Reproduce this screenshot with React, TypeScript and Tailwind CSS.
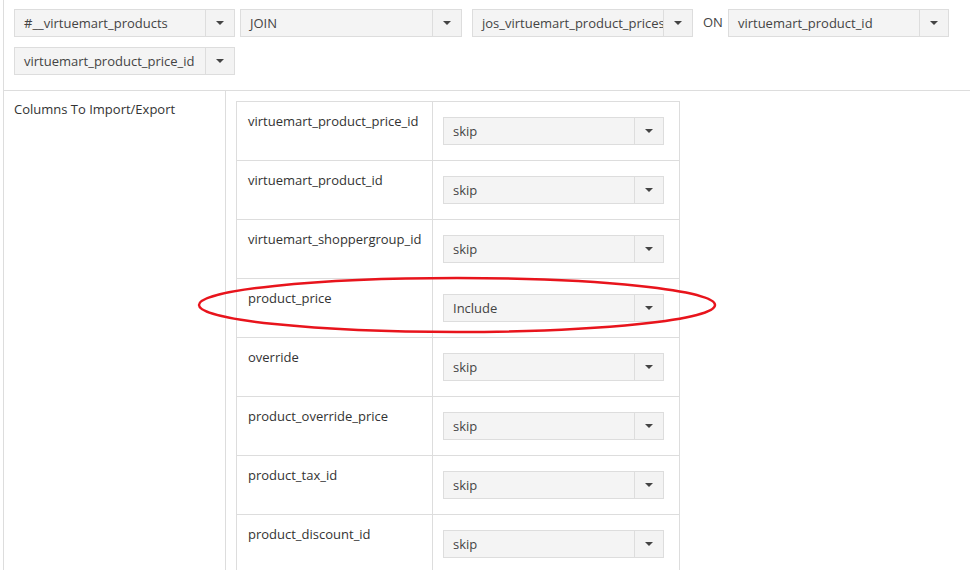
import React from 'react';

function Select({ value, className = '' }: { value: string; className?: string }) {
  return (
    <div className={`flex h-[28px] w-[221px] border border-[#dddddd] bg-[#f4f4f4] ${className}`}>
      <div className="flex-1 overflow-hidden whitespace-nowrap pl-[9px] leading-[26px] text-[#444]">{value}</div>
      <div className="flex w-[29px] items-center justify-center border-l border-[#dddddd] bg-[#f3f3f3]">
        <svg width="8" height="4" viewBox="0 0 8 4">
          <path d="M0 0h8L4 4z" fill="#444" />
        </svg>
      </div>
    </div>
  );
}

const columns = [
  { name: 'virtuemart_product_price_id', value: 'skip' },
  { name: 'virtuemart_product_id', value: 'skip' },
  { name: 'virtuemart_shoppergroup_id', value: 'skip' },
  { name: 'product_price', value: 'Include' },
  { name: 'override', value: 'skip' },
  { name: 'product_override_price', value: 'skip' },
  { name: 'product_tax_id', value: 'skip' },
  { name: 'product_discount_id', value: 'skip' },
];

export default function App() {
  return (
    <div className="relative h-[570px] w-[970px] overflow-hidden bg-white font-['Open_Sans',sans-serif] text-[13px] text-[#333]">
      <div className="ml-[3px] h-full border-l border-[#dddddd]">
        {/* Join row */}
        <div className="flex flex-col gap-[10px] pl-[10px] pt-[9px] pb-[15px]">
          <div className="flex items-center">
            <Select value="#__virtuemart_products" />
            <Select value="JOIN" className="ml-[5px] w-[222px]" />
            <Select value="jos_virtuemart_product_prices" className="ml-[10px]" />
            <span className="ml-[10px] mr-[5px] text-[#444]">ON</span>
            <Select value="virtuemart_product_id" />
          </div>
          <Select value="virtuemart_product_price_id" />
        </div>

        {/* Columns */}
        <div className="flex border-t border-[#dddddd]">
          <div className="w-[222px] border-r border-[#dddddd] pl-[10px] pt-[9px]">Columns To Import/Export</div>
          <div className="pl-[10px] pt-[10px]">
            <div className="w-[444px] border-x border-[#dddddd]">
              {columns.map(col => (
                <div key={col.name} className="flex h-[59px] border-t border-[#dddddd]">
                  <div className="w-[196px] overflow-hidden whitespace-nowrap border-r border-[#dddddd] pl-[11px] pr-[10px] pt-[10px]">
                    {col.name}
                  </div>
                  <div className="flex-1 pl-[10px] pt-[15px]">
                    <Select value={col.value} />
                  </div>
                </div>
              ))}
            </div>
          </div>
        </div>
      </div>

      {/* red highlight */}
      <svg className="pointer-events-none absolute left-[197px] top-[275px]" width="520" height="60" viewBox="0 0 520 60">
        <ellipse cx="260" cy="30" rx="258" ry="27" fill="none" stroke="#e8141c" strokeWidth="2.5" />
      </svg>
    </div>
  );
}
